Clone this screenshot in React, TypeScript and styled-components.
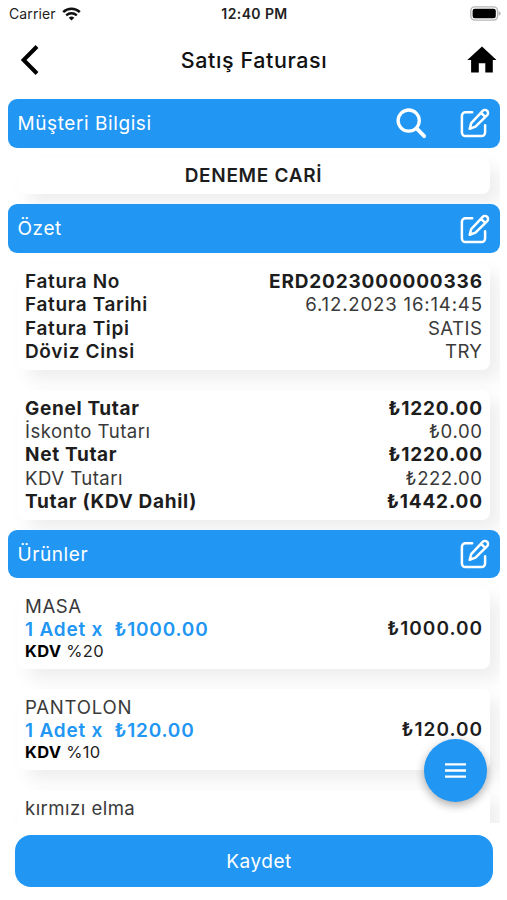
import React from "react";
import styled, { createGlobalStyle } from "styled-components";

const BLUE = "#2196f3";

const GlobalStyle = createGlobalStyle`
  * { box-sizing: border-box; }
  body {
    margin: 0;
    background: #fff;
    color: #1d1d1d;
    font-family: Inter, "Liberation Sans", sans-serif;
  }
`;

const Screen = styled.div`
  position: relative;
  display: flex;
  flex-direction: column;
  width: 507px;
  height: 900px;
  overflow: hidden;
  background: #fff;
`;

const StatusBar = styled.div`
  display: grid;
  grid-template-columns: 1fr auto 1fr;
  align-items: center;
  height: 27px;
  padding: 0 6px 0 9px;
  font-size: 14px;
  color: #222;
  flex: none;
`;

const Carrier = styled.div`
  display: flex;
  align-items: center;
  gap: 6px;
  letter-spacing: 0.1px;
`;

const Clock = styled.div`
  margin-left: -1px;
  font-weight: 600;
  letter-spacing: 0.4px;
`;

const Battery = styled.svg`
  justify-self: end;
`;

const NavBar = styled.header`
  display: grid;
  grid-template-columns: 60px 1fr 60px;
  align-items: center;
  height: 72px;
  padding: 0 9px 7px 8px;
  flex: none;
`;

const Title = styled.h1`
  margin: 0;
  padding-left: 2px;
  text-align: center;
  font-size: 21.5px;
  font-weight: 500;
  letter-spacing: 0.6px;
  color: #111;
`;

const IconButton = styled.button<{ $align?: string }>`
  display: flex;
  justify-content: ${(p) => p.$align ?? "center"};
  padding: 0;
  border: 0;
  background: none;
  color: inherit;
`;

const Content = styled.main`
  width: 492px;
  height: 723.5px;
  margin-left: 8px;
  overflow: hidden;
  flex: none;
`;

const SectionBar = styled.div`
  position: relative;
  display: flex;
  align-items: center;
  height: 48.5px;
  padding: 0 10px 0 9.5px;
  border-radius: 9px;
  background: ${BLUE};
  color: #fff;
`;

const SectionTitle = styled.h2`
  flex: 1;
  margin: 0;
  font-size: 19px;
  font-weight: 400;
  letter-spacing: 0.58px;
`;

const Actions = styled.div`
  display: flex;
  align-items: center;
  gap: 32px;
`;

const Card = styled.section<{ $gap?: number }>`
  margin: 10px 10px ${(p) => p.$gap ?? 10}px;
  padding: 7.3px 8px 6.7px 7px;
  border-radius: 8px;
  background: #fff;
  box-shadow: 10px 10px 18px rgba(0, 0, 0, 0.07);
`;

const Customer = styled.div`
  line-height: 22px;
  padding-bottom: 1px;
  text-align: center;
  font-size: 19px;
  font-weight: 600;
  letter-spacing: 0.7px;
`;

const Row = styled.div<{ $bold?: boolean }>`
  display: flex;
  justify-content: space-between;
  line-height: 23.2px;
  font-size: ${(p) => (p.$bold ? 19 : 18.6)}px;
  font-weight: ${(p) => (p.$bold ? 650 : 400)};
  color: ${(p) => (p.$bold ? "#1d1d1d" : "#3a3a3a")};
  letter-spacing: ${(p) => (p.$bold ? 0.67 : 0.45)}px;
`;

const Label = styled.span`
  font-size: 19px;
  font-weight: 600;
  letter-spacing: 0.65px;
  color: #1d1d1d;
`;

const Value = styled.span<{ $bold?: boolean; $spacing?: number }>`
  font-size: ${(p) => (p.$bold ? 19 : 18.6)}px;
  font-weight: ${(p) => (p.$bold ? 650 : "inherit")};
  letter-spacing: ${(p) => p.$spacing ?? 0.4}px;
  margin-right: -${(p) => p.$spacing ?? 0.4}px;
  ${(p) => p.$bold && "color: #1d1d1d;"}
`;

const Product = styled.div`
  display: flex;
  align-items: center;
  justify-content: space-between;
  height: 67px;
`;

const ProductInfo = styled.div`
  height: 68px;
`;

const ProductName = styled.div<{ $spacing: number }>`
  line-height: 23.2px;
  font-size: 18.6px;
  letter-spacing: ${(p) => p.$spacing}px;
  color: #3a3a3a;
`;

const Quantity = styled.div`
  line-height: 23.2px;
  font-size: 19px;
  font-weight: 600;
  letter-spacing: 0.81px;
  white-space: pre;
  color: ${BLUE};
`;

const Tax = styled.div`
  line-height: 20px;
  font-size: 16.5px;
  letter-spacing: 0.3px;
  color: #222;
`;

const TaxLabel = styled.b`
  font-weight: 700;
  color: #000;
`;

const Amount = styled.div`
  margin-right: -1px;
  padding-bottom: 1px;
  font-size: 19px;
  font-weight: 600;
  letter-spacing: 1px;
`;

const SaveButton = styled.button`
  width: 478px;
  height: 52px;
  margin: 12.5px 0 0 15px;
  padding: 0 0 0 10px;
  border: 0;
  border-radius: 16px;
  background: ${BLUE};
  color: #fff;
  font: 400 19px Inter, "Liberation Sans", sans-serif;
  letter-spacing: 0.55px;
  flex: none;
`;

const FloatingButton = styled.button`
  position: absolute;
  right: 20px;
  bottom: 98px;
  display: flex;
  align-items: center;
  justify-content: center;
  width: 63px;
  height: 63px;
  padding: 0;
  border: 0;
  border-radius: 50%;
  background: ${BLUE};
  box-shadow: 0 4px 8px rgba(0, 0, 0, 0.24), 0 2px 12px rgba(0, 0, 0, 0.1);
`;

const EditIcon = () => (
  <svg width="30" height="30" viewBox="0 0 30 30" fill="none" stroke="#fff" strokeWidth="2.5" strokeLinecap="round" strokeLinejoin="round">
    <path d="M12.2 4.3H5.4a3.5 3.5 0 0 0-3.5 3.5v16.8a3.5 3.5 0 0 0 3.5 3.5h16.2a3.5 3.5 0 0 0 3.5-3.5v-7.4" />
    <path d="M9.7 20.7l1.5-5.6L22.7 2.9a2.9 2.9 0 0 1 4.5 4.2L15.5 18.6zM21 4.9l4 3.8" />
  </svg>
);

const SearchIcon = () => (
  <svg width="32" height="31" viewBox="0 0 32 31" fill="none" stroke="#fff" strokeLinecap="round">
    <circle cx="12.7" cy="12.6" r="10.6" strokeWidth="3.3" />
    <path d="M20.6 20.4l7.6 7.8" strokeWidth="3.8" />
  </svg>
);

const summary = [
  ["Fatura No", "ERD2023000000336", true, 0.83],
  ["Fatura Tarihi", "6.12.2023 16:14:45", false, 0.82],
  ["Fatura Tipi", "SATIS", false, 0.5],
  ["Döviz Cinsi", "TRY", false, 0.4],
] as const;

const totals = [
  ["Genel Tutar", "₺1220.00", true, 0.83],
  ["İskonto Tutarı", "₺0.00", false, 0.6],
  ["Net Tutar", "₺1220.00", true, 0.83],
  ["KDV Tutarı", "₺222.00", false, 0.5],
  ["Tutar (KDV Dahil)", "₺1442.00", true, 0.83],
] as const;

const products = [
  { name: "MASA", spacing: 0.6, quantity: "1 Adet x  ₺1000.00", tax: "%20", amount: "₺1000.00" },
  { name: "PANTOLON", spacing: 0.75, quantity: "1 Adet x  ₺120.00", tax: "%10", amount: "₺120.00" },
  { name: "kırmızı elma", spacing: 0.45 },
];

export default function App() {
  return (
    <Screen>
      <GlobalStyle />
      <StatusBar>
        <Carrier>
          Carrier
          <svg width="19" height="14" viewBox="0 0 19 14" fill="none" stroke="#111">
            <path d="M1.2 5.1a12 12 0 0 1 16.6 0" strokeWidth="2.5" />
            <path d="M4.2 8.4a7.6 7.6 0 0 1 10.6 0" strokeWidth="2.3" />
            <path d="M9.5 13.6L6.7 10.8a4 4 0 0 1 5.6 0z" fill="#111" stroke="none" />
          </svg>
        </Carrier>
        <Clock>12:40 PM</Clock>
        <Battery width="31" height="15" viewBox="0 0 31 15">
          <rect x="0.8" y="0.9" width="26.8" height="13.2" rx="4" fill="#fff" stroke="#b5b5b5" strokeWidth="1.4" />
          <rect x="2.6" y="2.8" width="23.2" height="9.4" rx="2.2" fill="#000" />
          <path d="M28.7 5.2q2 .6 2 2.3t-2 2.3z" fill="#b5b5b5" />
        </Battery>
      </StatusBar>

      <NavBar>
        <IconButton $align="flex-start" aria-label="Geri">
          <svg width="32" height="32" viewBox="0 0 32 32" fill="none" stroke="#000" strokeWidth="4">
            <path d="M29 2.5L15.6 16L29 29.5" strokeLinejoin="miter" />
          </svg>
        </IconButton>
        <Title>Satış Faturası</Title>
        <IconButton $align="flex-end" aria-label="Ana sayfa">
          <svg width="32" height="28" viewBox="0 0 32 28">
            <path d="M16 0.5L30.5 14H26.8V26.5H19.3V17.3H12.8V26.5H5.1V14H1.3z" />
          </svg>
        </IconButton>
      </NavBar>

      <Content>
        <SectionBar>
          <SectionTitle>Müşteri Bilgisi</SectionTitle>
          <Actions>
            <IconButton aria-label="Ara"><SearchIcon /></IconButton>
            <IconButton aria-label="Düzenle"><EditIcon /></IconButton>
          </Actions>
        </SectionBar>
        <Card>
          <Customer>DENEME CARİ</Customer>
        </Card>

        <SectionBar>
          <SectionTitle>Özet</SectionTitle>
          <IconButton aria-label="Düzenle"><EditIcon /></IconButton>
        </SectionBar>
        <Card $gap={20}>
          {summary.map(([label, value, bold, spacing]) => (
            <Row key={label}>
              <Label>{label}</Label>
              <Value $bold={bold} $spacing={spacing}>{value}</Value>
            </Row>
          ))}
        </Card>
        <Card>
          {totals.map(([label, value, bold, spacing]) => (
            <Row key={label} $bold={bold}>
              <span>{label}</span>
              <Value $bold={bold} $spacing={spacing}>{value}</Value>
            </Row>
          ))}
        </Card>

        <SectionBar>
          <SectionTitle>Ürünler</SectionTitle>
          <IconButton aria-label="Düzenle"><EditIcon /></IconButton>
        </SectionBar>
        {products.map((p) => (
          <Card key={p.name} $gap={20}>
            <Product>
              <ProductInfo>
                <ProductName $spacing={p.spacing}>{p.name}</ProductName>
                {p.quantity && <Quantity>{p.quantity}</Quantity>}
                {p.tax && (
                  <Tax>
                    <TaxLabel>KDV</TaxLabel> {p.tax}
                  </Tax>
                )}
              </ProductInfo>
              {p.amount && <Amount>{p.amount}</Amount>}
            </Product>
          </Card>
        ))}
      </Content>

      <SaveButton>Kaydet</SaveButton>
      <FloatingButton aria-label="Menü">
        <svg width="21" height="15" viewBox="0 0 21 15" stroke="#fff" strokeWidth="2.3">
          <path d="M0 1.3H21M0 7.5H21M0 13.7H21" />
        </svg>
      </FloatingButton>
    </Screen>
  );
}
